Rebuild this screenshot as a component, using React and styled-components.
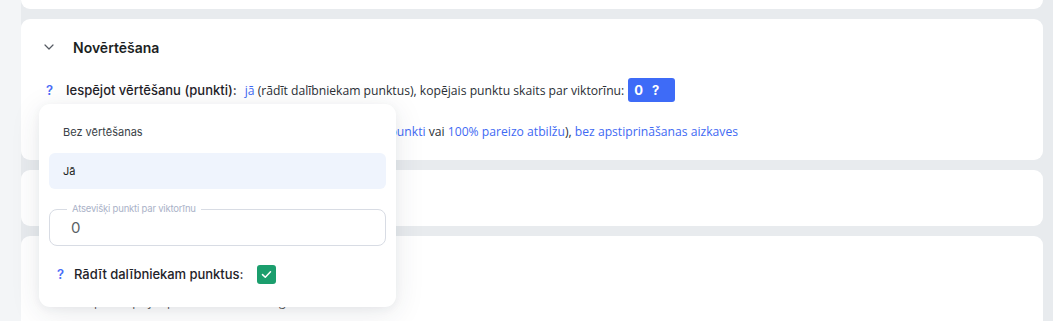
import React from "react";
import styled, { createGlobalStyle } from "styled-components";

const Global = createGlobalStyle`
  html, body { margin: 0; padding: 0; }
  body {
    background: #f3f5f7;
    font-family: Inter, "Noto Sans", sans-serif;
    color: #1f2329;
    overflow: hidden;
  }
`;

const Page = styled.div`
  height: 321px;
  padding-left: 21px;
  overflow: hidden;
  position: relative;
`;

const Column = styled.div`
  background: #e8ebee;
  padding-right: 10px;
  display: flex;
  flex-direction: column;
  gap: 10px;
  margin-top: -30px;
  height: 400px;
`;

const Card = styled.section`
  background: #fff;
  border-radius: 9px;
  height: ${(p) => p.$h}px;
  box-sizing: border-box;
  padding: 0 23px;
  flex-shrink: 0;
`;

const TitleRow = styled.div`
  display: flex;
  align-items: center;
  height: 56px;
  gap: 19px;
`;

const Title = styled.h3`
  margin: 0;
  font-size: 14px;
  font-weight: 600;
  color: #1c1f23;
`;

const Line = styled.div`
  display: flex;
  align-items: center;
  height: 24px;
  white-space: nowrap;
  margin-top: ${(p) => p.$mt || 0}px;
`;

const Help = styled.span`
  color: #4a6cf7;
  font-weight: 600;
  font-size: 13px;
  width: 20px;
  padding-left: 2px;
`;

const Label = styled.span`
  font-weight: 500;
  font-size: 13px;
  color: #1f2329;
  margin-right: ${(p) => (p.$mr ?? 8)}px;
`;

const Text = styled.span`
  font-family: "Open Sans", sans-serif;
  font-size: 12.17px;
  color: #2b2f36;
`;

const Link = styled(Text)`
  color: #3f6af3;
`;

const Badge = styled.span`
  display: inline-flex;
  align-items: center;
  gap: 9px;
  height: 24px;
  padding: 0 16px 0 6px;
  margin-left: 4px;
  background: #3e6bf7;
  border-radius: 3px;
  color: #fff;
  font-weight: 700;
  font-size: 13px;
`;

const Popup = styled.div`
  position: absolute;
  left: 39px;
  top: 104px;
  width: 357px;
  height: 203px;
  box-sizing: border-box;
  background: #fff;
  border-radius: 11px;
  box-shadow: 0 6px 30px rgba(40, 50, 70, 0.1), 0 2px 8px rgba(40, 50, 70, 0.05);
  padding: 10px 10px 0;
  display: flex;
  flex-direction: column;
`;

const Option = styled.div`
  height: 36px;
  display: flex;
  align-items: center;
  padding-left: 14px;
  font-size: 11px;
  color: ${(p) => (p.$active ? "#1c1f23" : "#3a3f47")};
  background: ${(p) => (p.$active ? "#eff4fd" : "transparent")};
  border-radius: 6px;
  margin-bottom: 3px;
`;

const Field = styled.div`
  position: relative;
  margin-top: 17px;
  height: 37px;
  box-sizing: border-box;
  border: 1px solid #d8dce4;
  border-radius: 8px;
  padding-left: 21px;
  display: flex;
  align-items: center;
`;

const FloatLabel = styled.span`
  position: absolute;
  left: 17px;
  top: -6px;
  background: #fff;
  font-size: 9.5px;
  line-height: 10px;
  color: #aab2c8;
  padding: 0 5px;
  letter-spacing: -0.2px;
`;

const Value = styled.span`
  font-size: 15px;
  color: #5a5f66;
`;

const CheckRow = styled.div`
  display: flex;
  align-items: center;
  margin-top: 17px;
  padding-left: 8px;
  height: 22px;
`;

const HelpSmall = styled(Help)`
  width: 17px;
  padding-left: 0;
`;

const CheckLabel = styled.span`
  font-size: 13px;
  font-weight: 500;
  color: #1f2329;
  margin-right: 14px;
  letter-spacing: -0.05px;
`;

const Check = styled.span`
  width: 19px;
  height: 19px;
  border-radius: 3px;
  background: #1b9e6d;
  display: inline-flex;
  align-items: center;
  justify-content: center;
`;

const Hidden = styled.div`
  padding: 57px 0 0 36px;
  font-size: 12px;
  font-family: "Open Sans", sans-serif;
  color: #555;
`;

export default function App() {
  return (
    <>
      <Global />
      <Page>
        <Column>
          <Card $h={39} />
          <Card $h={141}>
            <TitleRow>
              <svg width="10" height="6" viewBox="0 0 10 6" fill="none">
                <path d="M1 1l4 4 4-4" stroke="#555a62" strokeWidth="1.2" strokeLinecap="round" strokeLinejoin="round" />
              </svg>
              <Title>Novērtēšana</Title>
            </TitleRow>
            <Line $mt={3}>
              <Help>?</Help>
              <Label>Iespējot vērtēšanu (punkti):</Label>
              <Link>jā</Link>
              <Text>&nbsp;(rādīt dalībniekam punktus), kopējais punktu skaits par viktorīnu:</Text>
              <Badge>
                <span>0</span>
                <span>?</span>
              </Badge>
            </Line>
            <Line $mt={17}>
              <Help>?</Help>
              <Label $mr={3}>Nokārtošanas nosacījumi testam:</Label>
              <Text>ieskaitīt ar&nbsp;</Text>
              <Link>vismaz 0 punkti</Link>
              <Text>&nbsp;vai&nbsp;</Text>
              <Link>100% pareizo atbilžu</Link>
              <Text>),&nbsp;</Text>
              <Link>bez apstiprināšanas aizkaves</Link>
            </Line>
          </Card>
          <Card $h={56} />
          <Card $h={120}>
            <Hidden>Papildu opcijas pēc vērtēšanas ieslēgšanas</Hidden>
          </Card>
        </Column>
        <Popup>
          <Option>Bez vērtēšanas</Option>
          <Option $active>Jā</Option>
          <Field>
            <FloatLabel>Atsevišķi punkti par viktorīnu</FloatLabel>
            <Value>0</Value>
          </Field>
          <CheckRow>
            <HelpSmall>?</HelpSmall>
            <CheckLabel>Rādīt dalībniekam punktus:</CheckLabel>
            <Check>
              <svg width="11" height="9" viewBox="0 0 11 9" fill="none">
                <path d="M1.5 4.6l2.8 2.7L9.5 1.7" stroke="#fff" strokeWidth="1.5" strokeLinecap="round" strokeLinejoin="round" />
              </svg>
            </Check>
          </CheckRow>
        </Popup>
      </Page>
    </>
  );
}
